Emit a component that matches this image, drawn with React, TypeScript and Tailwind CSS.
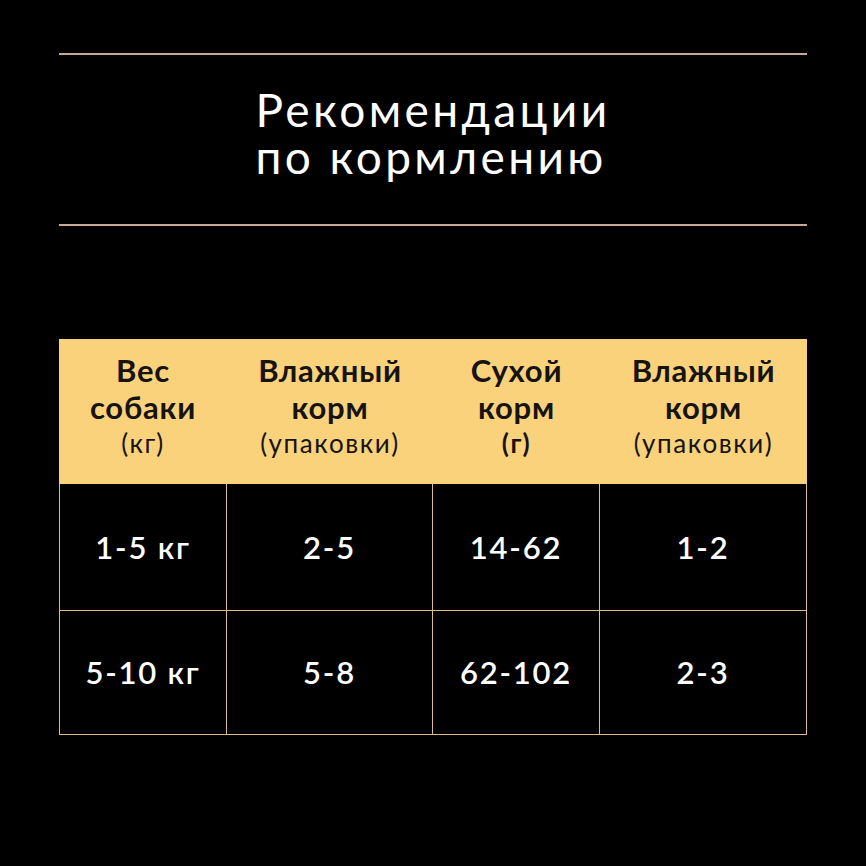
import React from "react";

const headers = [
  { t: ["Вес", "собаки"], s: "(кг)" },
  { t: ["Влажный", "корм"], s: "(упаковки)" },
  { t: ["Сухой", "корм"], s: "(г)", sBold: true },
  { t: ["Влажный", "корм"], s: "(упаковки)" },
];

const rows = [
  ["1-5 кг", "2-5", "14-62", "1-2"],
  ["5-10 кг", "5-8", "62-102", "2-3"],
];

export default function App() {
  const font = { fontFamily: "Lato, 'Open Sans', 'Noto Sans', sans-serif" };
  return (
    <div className="w-[866px] h-[866px] bg-black pt-[53px] px-[59px]" style={font}>
      <div className="h-[2px] bg-[#c9a892]" />
      <div className="h-[169px] flex items-center justify-center">
        <div className="text-white text-[46px] leading-[47px] tracking-[3.4px] font-normal text-left mt-[-14px]">
          <div>Рекомендации</div>
          <div>по кормлению</div>
        </div>
      </div>
      <div className="h-[2px] bg-[#c9a892]" />
      <div className="mt-[113px] grid grid-cols-[168px_206px_167px_207px]">
        {headers.map((h, i) => (
          <div
            key={i}
            className="bg-[#fad27c] h-[145px] flex flex-col items-center justify-center text-[#161310] pb-[10px]"
          >
            {h.t.map((l, j) => (
              <div key={j} className="text-[31px] leading-[37px] font-bold tracking-[0.8px]">
                {l}
              </div>
            ))}
            <div
              className={
                "text-[26px] leading-[35px] tracking-[1.6px] " +
                (h.sBold ? "font-bold" : "font-normal")
              }
            >
              {h.s}
            </div>
          </div>
        ))}
        {rows.map((r, ri) =>
          r.map((c, ci) => (
            <div
              key={ri + "-" + ci}
              className={
                "flex items-center justify-center text-white text-[31px] font-semibold tracking-[1.8px] border-[#dcbc8c] border-b " +
                (ci === 0 ? "border-l " : "") +
                "border-r " +
                (ri === 0 ? "h-[127px]" : "h-[124px]")
              }
            >
              {c}
            </div>
          ))
        )}
      </div>
    </div>
  );
}
